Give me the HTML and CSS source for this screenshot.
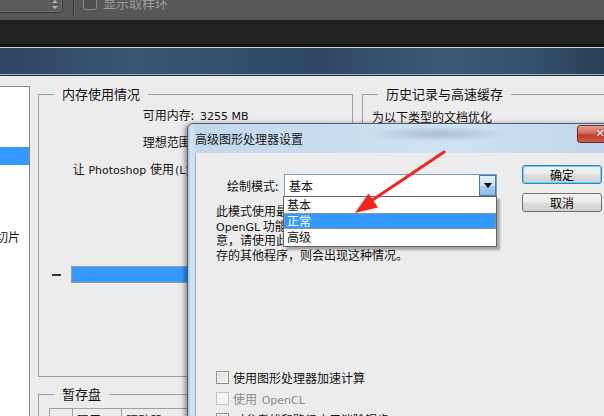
FILE: index.html
```html
<!DOCTYPE html>
<html lang="zh-CN">
<head>
    <meta charset="UTF-8">
    <title>首选项 - 性能</title>
    <link rel="stylesheet" href="styles.css">
</head>
<body>
    <!-- 工具选项栏 -->
    <div class="toolbar">
        <div class="tool-select">
            <svg class="spin" width="6" height="9" viewBox="0 0 6 9"><path d="M3 0 L6 3 L0 3 Z M0 6 L6 6 L3 9 Z" fill="#b5b5b5"/></svg>
        </div>
        <div class="tool-sep"></div>
        <span class="tool-check"></span>
        <span class="tool-label">显示取样环</span>
    </div>
    <div class="docbar"></div>

    <!-- 首选项窗口 -->
    <div class="prefs-title"></div>
    <div class="prefs-body">
        <ul class="pref-list">
            <li>常规</li>
            <li>界面</li>
            <li>文件处理</li>
            <li class="sel">性能</li>
            <li>光标</li>
            <li>透明度与色域</li>
            <li>单位与标尺</li>
            <li>参考线、网格和切片</li>
            <li>增效工具</li>
            <li>文字</li>
            <li>3D</li>
        </ul>
        <div class="pref-main">
            <div class="pref-top">
                <fieldset class="grp grp-mem">
                    <legend>内存使用情况</legend>
                    <div class="mem-rows">
                        <span class="mem-label">可用内存:</span>
                        <span><span class="en">3255 MB</span></span>
                        <span class="mem-label">理想范围:</span>
                        <span><span class="en">1790-2343 MB</span></span>
                        <span class="mem-label">让 <span class="en">Photoshop</span> 使用<span class="en">(L)</span>:</span>
                        <span><span class="en">1953 MB (60%)</span></span>
                    </div>
                    <div class="mem-slider">
                        <span class="dash"></span>
                        <span class="bar"></span>
                    </div>
                </fieldset>
                <fieldset class="grp grp-hist">
                    <legend>历史记录与高速缓存</legend>
                    <div class="hist-text">为以下类型的文档优化</div>
                </fieldset>
            </div>
            <fieldset class="grp grp-scratch">
                <legend>暂存盘</legend>
                <table class="disks">
                    <tr>
                        <th class="c-num"></th>
                        <th class="c-on">现用?</th>
                        <th class="c-drive">驱动器</th>
                        <th>可用空间</th>
                    </tr>
                </table>
            </fieldset>
        </div>
    </div>

    <!-- 高级图形处理器设置 对话框 -->
    <div class="gpu-dlg">
        <div class="dlg-title">
            <span>高级图形处理器设置</span>
            <span class="dlg-close">✕</span>
        </div>
        <div class="dlg-client">
            <div class="dlg-main">
                <div class="mode-row">
                    <span class="mode-label">绘制模式:</span>
                    <div class="select">
                        <span class="select-text">基本</span>
                        <span class="select-btn"><svg width="8" height="5" viewBox="0 0 8 5"><path d="M0 0 H8 L4 5 Z" fill="#000"/></svg></span>
                    </div>
                </div>
                <div class="desc">
                    <div>此模式使用最少的 <span class="en">GPU</span> 内存并启用最基本的</div>
                    <div><span class="en">OpenGL</span> 功能。如果您在使用其他程序时遇到注</div>
                    <div>意，请使用此模式。如果 <span class="en">Photoshop</span> 与占用 <span class="en">GPU</span> 内</div>
                    <div>存的其他程序，则会出现这种情况。</div>
                </div>
                <div class="checks">
                    <div class="check-row"><span class="cb"></span><span>使用图形处理器加速计算</span></div>
                    <div class="check-row off"><span class="cb"></span><span>使用 <span class="en">OpenCL</span></span></div>
                    <div class="check-row"><span class="cb on"><svg width="9" height="9" viewBox="0 0 9 9"><path d="M1 4.5 L3.5 7 L8 1.5" fill="none" stroke="#2a4b7c" stroke-width="1.8"/></svg></span><span>对参考线和路径应用消除锯齿</span></div>
                </div>
            </div>
            <div class="dlg-btns">
                <div class="btn btn-default">确定</div>
                <div class="btn">取消</div>
            </div>
            <ul class="drop-list">
                <li>基本</li>
                <li class="picked">正常</li>
                <li>高级</li>
            </ul>
        </div>
    </div>

    <svg class="arrow" width="604" height="416" viewBox="0 0 604 416">
        <line x1="444" y1="152" x2="371" y2="201" stroke="#ee261c" stroke-width="3" stroke-linecap="round"/>
        <polygon points="355,213 378,207.5 368.5,193.5" fill="#ee261c"/>
    </svg>
</body>
</html>
```

FILE: styles.css
```css
body {
    margin: 0;
    width: 604px;
    height: 416px;
    overflow: hidden;
    position: relative;
    background-color: #ececec;
    font-family: "Noto Sans CJK SC", sans-serif;
    font-size: 12px;
    color: #111;
}
.en {
    font-family: "DejaVu Sans", sans-serif;
    font-size: 11px;
}

/* 工具选项栏 */
.toolbar {
    height: 20px;
    background-color: #575757;
    display: flex;
    align-items: flex-start;
}
.tool-select {
    width: 67px;
    height: 18px;
    margin: -5px 0 0 -4px;
    box-sizing: border-box;
    border: 1px solid #3c3c3c;
    border-radius: 0 0 3px 3px;
    background-color: #5c5c5c;
    box-shadow: inset 0 0 0 1px #6e6e6e;
    display: flex;
    justify-content: flex-end;
    align-items: center;
    padding-right: 4px;
}
.tool-sep {
    width: 1px;
    height: 15px;
    margin-left: 10px;
    background-color: #3b3b3b;
    box-shadow: 1px 0 #666;
}
.tool-check {
    width: 14px;
    height: 14px;
    margin: -4px 0 0 9px;
    box-sizing: border-box;
    border: 1px solid #8a8a8a;
    border-radius: 3px;
    background-color: #4f4f4f;
}
.tool-label {
    margin: -4px 0 0 6px;
    color: #9c9c9c;
    font-size: 13px;
    line-height: 13px;
}
.docbar {
    height: 24px;
    background-color: #232323;
    border-bottom: 3px solid #131313;
}

/* 首选项窗口 */
.prefs-title {
    height: 27px;
    border-top: 1px solid #cbd3dc;
    border-bottom: 1px solid #1c2733;
    box-shadow: inset 0 -1px #a3b3c4;
    background: linear-gradient(90deg, #2d4560 0%, #3c5571 22%, #35506c 36%, #2e4661 52%, #3f5975 74%, #36506b 88%, #2a3f57 100%);
}
.prefs-body {
    display: flex;
    align-items: flex-start;
    padding-top: 10px;
}
.pref-list {
    list-style: none;
    margin: 0 0 0 -92px;
    padding: 0;
    width: 121px;
    height: 340px;
    flex-shrink: 0;
    background-color: #fff;
    border-top: 1px solid #828790;
    border-right: 1px solid #828790;
}
.pref-list li {
    height: 20px;
    line-height: 20px;
    padding-left: 4px;
    white-space: nowrap;
}
.pref-list li.sel {
    background: linear-gradient(#3399ff 0, #3399ff 18px, transparent 18px);
    color: #fff;
}
.pref-main {
    margin-left: 8px;
    flex: 1;
    min-width: 0;
}
.pref-top {
    display: flex;
}
.grp {
    margin: 0;
    padding: 0;
    min-width: 0;
    border: 1px solid #a0a0a0;
    box-sizing: border-box;
}
.grp legend {
    font-size: 13px;
    line-height: 16px;
    margin-left: 15px;
    padding: 0 8px;
}
.grp-mem {
    width: 315px;
    height: 291px;
    flex-shrink: 0;
}
.grp-hist {
    flex: 1;
    height: 291px;
    margin: 0 -40px 0 9px;
}
.mem-rows {
    display: grid;
    grid-template-columns: 155px auto;
    column-gap: 6px;
    line-height: 25px;
    white-space: nowrap;
}
.mem-label {
    text-align: right;
}
.mem-label .en {
    margin: 0 1px;
}
.mem-slider {
    display: flex;
    align-items: center;
    margin-top: 83px;
    padding-left: 13px;
}
.dash {
    width: 9px;
    height: 2px;
    background-color: #333;
}
.bar {
    width: 260px;
    height: 17px;
    margin-left: 10px;
    box-sizing: border-box;
    border: 1px solid #9a9a9a;
    background-color: #3399ff;
}
.hist-text {
    padding: 6px 0 0 9px;
    line-height: 18px;
}
.grp-scratch {
    margin-top: 9px;
    width: 620px;
    height: 80px;
}
.disks {
    margin: 6px 0 0 10px;
    border-collapse: collapse;
}
.disks th {
    height: 20px;
    padding: 0 0 0 4px;
    font-weight: normal;
    text-align: left;
    border: 1px solid #a0a0a0;
}
.disks .c-num { width: 18px; }
.disks .c-on { width: 44px; }
.disks .c-drive { width: 80px; }

/* 对话框 */
.gpu-dlg {
    position: absolute;
    left: 187px;
    top: 123px;
    width: 440px;
    height: 320px;
    padding-left: 7px;
    box-sizing: border-box;
    border: 1px solid #4d5e71;
    border-radius: 6px 6px 0 0;
    background:
        radial-gradient(ellipse 70px 8px at 250px 10px, rgba(120, 145, 170, 0.45), transparent),
        linear-gradient(90deg, #a9c0d8 0, #d6e5f4 3px, #c3d7ec 8px, #d0e1f2 60%, #bfd4ea 100%);
    box-shadow: -2px 1px 5px rgba(0, 0, 0, 0.45);
}
.dlg-title {
    height: 29px;
    display: flex;
    align-items: center;
    color: #1a1a1a;
}
.dlg-close {
    margin: 0 3px 0 auto;
    align-self: flex-start;
    margin-top: 1px;
    width: 46px;
    height: 18px;
    box-sizing: border-box;
    border: 1px solid #6b2c22;
    border-radius: 3px;
    background: linear-gradient(#e6a394, #d06a5c 45%, #c0402f 55%, #c95a45);
    color: #fff;
    font-family: "DejaVu Sans", sans-serif;
    font-size: 11px;
    font-weight: bold;
    line-height: 16px;
    text-align: center;
    text-shadow: 0 0 2px #5a1a10;
}
.dlg-client {
    position: relative;
    display: flex;
    height: 300px;
    background-color: #ececec;
    border-left: 1px solid #9fb3c8;
}
.dlg-main {
    width: 326px;
    flex-shrink: 0;
}
.mode-row {
    display: flex;
    align-items: center;
    margin-top: 21px;
    padding-left: 31px;
}
.mode-label {
    width: 52px;
    margin-right: 5px;
    white-space: nowrap;
}
.select {
    width: 213px;
    height: 23px;
    box-sizing: border-box;
    border: 1px solid #7f9db9;
    background-color: #fff;
    display: flex;
}
.select-text {
    flex: 1;
    padding-left: 4px;
    line-height: 21px;
}
.select-btn {
    width: 17px;
    box-sizing: border-box;
    border: 1px solid #3c7fb1;
    background: linear-gradient(#e4f1fc, #c5e0f7 50%, #a6cdf0 52%, #8fc0ec);
    display: flex;
    align-items: center;
    justify-content: center;
}
.desc {
    margin-top: 8px;
    padding-left: 20px;
    line-height: 12.7px;
    white-space: nowrap;
}
.checks {
    margin-top: 105px;
    padding-left: 20px;
}
.check-row {
    height: 21px;
    display: flex;
    align-items: center;
    white-space: nowrap;
}
.check-row.off {
    color: #8a8a8a;
}
.check-row .en {
    margin-left: 2px;
}
.cb {
    width: 13px;
    height: 13px;
    margin-right: 4px;
    box-sizing: border-box;
    border: 1px solid #8e8f8f;
    background: linear-gradient(135deg, #d6d6d6, #f8f8f8);
    box-shadow: inset 0 0 0 1px #f4f4f4;
    display: flex;
    align-items: center;
    justify-content: center;
}
.check-row.off .cb {
    border-color: #c2c2c2;
    background: #f2f2f2;
}
.dlg-btns {
    padding-top: 12px;
    display: flex;
    flex-direction: column;
    gap: 9px;
}
.btn {
    width: 80px;
    height: 19px;
    box-sizing: border-box;
    border: 1px solid #707070;
    border-radius: 3px;
    background: linear-gradient(#f3f3f3 0, #ebebeb 48%, #dddddd 52%, #cfcfcf 100%);
    text-align: center;
    line-height: 17px;
    color: #000;
}
.btn-default {
    border-color: #3c7fb1;
    box-shadow: inset 0 0 0 1px #5fd4ff;
}
.drop-list {
    position: absolute;
    left: 87px;
    top: 43px;
    width: 214px;
    height: 51px;
    margin: 0;
    padding: 0;
    list-style: none;
    box-sizing: border-box;
    border: 1px solid #646464;
    background-color: #fff;
    box-shadow: 3px 3px 2px rgba(0, 0, 0, 0.3);
}
.drop-list li {
    height: 16px;
    line-height: 16px;
    padding-left: 3px;
}
.drop-list li.picked {
    background-color: #3399ff;
    color: #fff;
    outline: 1px dotted #d9903a;
    outline-offset: -1px;
}
.arrow {
    position: absolute;
    left: 0;
    top: 0;
    pointer-events: none;
}
```
